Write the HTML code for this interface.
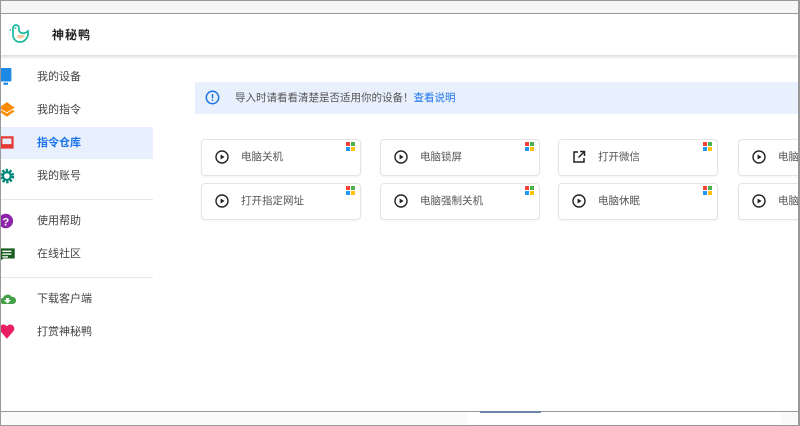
<!DOCTYPE html><html><head><meta charset="utf-8"><style>
*{margin:0;padding:0;box-sizing:border-box}
body{width:800px;height:426px;overflow:hidden;background:#fff;font-family:"Liberation Sans","Noto Sans CJK SC",sans-serif;position:relative}
.abs{position:absolute}
.item{position:absolute;left:0;width:153px;height:32px;font-size:11px;color:#444;line-height:32px;padding-left:37px}
.item .ic{position:absolute;left:0px;top:7px;width:16px;height:18px}
.card{position:absolute;width:160px;height:37px;border:1px solid #e4e4e4;border-radius:4px;font-size:10.5px;color:#555;line-height:35px;padding-left:39px;box-shadow:0 1px 2px rgba(0,0,0,.05)}
.card svg.p{position:absolute;left:13px;top:10px}
.win{position:absolute;right:5px;top:2px;width:9px;height:9px}
</style></head><body>
<div class="abs" style="left:0;top:0;width:800px;height:14px;background:#f6f6f6;border-top:1px solid #999;border-bottom:1px solid #999"></div>
<div class="abs" style="left:0;top:14px;width:798px;height:41px;background:#fff;box-shadow:0 2px 3px rgba(0,0,0,.15)"></div>
<svg class="abs" style="left:9px;top:24px" width="22" height="21" viewBox="0 0 22 21"><path d="M4 4 a3 3 0 0 1 6 0 v3 c2 3 6 3 9 0 c1 6-3 11-8 11 c-4 0-7-3-7-7z" fill="none" stroke="#1bb8a0" stroke-width="1.7"/><path d="M8 11 h8 c-1 3-5 5-8 2z" fill="#f5c9a0"/><circle cx="6.5" cy="4" r="0.9" fill="#1bb8a0"/><path d="M2 5 l-2 1 2 1" fill="#1bb8a0"/></svg>
<div class="abs" style="left:52px;top:26px;font-size:12px;font-weight:bold;color:#222;letter-spacing:1px">神秘鸭</div>
<div class="abs" style="left:0;top:127px;width:153px;height:32px;background:#e8f0fe"></div>
<div class="item" style="top:61px"><svg class="ic" viewBox="0 0 14 16"><rect x="0" y="0" width="10" height="12" rx="1" fill="#1e88e5"/><rect x="3" y="13" width="4" height="2" fill="#1e88e5"/></svg>我的设备</div>
<div class="item" style="top:94px"><svg class="ic" viewBox="0 0 14 16"><path d="M6 1 L13 6 L6 10 L-1 6Z" fill="#fb8c00"/><path d="M-1 9 L6 14 L13 9 L11 8 L6 11 L1 8Z" fill="#fb8c00"/></svg>我的指令</div>
<div class="item" style="top:127px;color:#1a73e8;font-weight:bold"><svg class="ic" viewBox="0 0 14 16"><path d="M0 2h12v11h-12z M2 4v5h8v-5z" fill="#e53935" fill-rule="evenodd"/></svg>指令仓库</div>
<div class="item" style="top:160px"><svg class="ic" viewBox="0 0 14 16"><circle cx="6" cy="8" r="5" fill="none" stroke="#00897b" stroke-width="3" stroke-dasharray="2 1.2"/><circle cx="6" cy="8" r="3.5" fill="none" stroke="#00897b" stroke-width="2"/></svg>我的账号</div>
<div class="abs" style="left:0;top:199px;width:153px;height:1px;background:#e6e6e6"></div>
<div class="item" style="top:205px"><svg class="ic" viewBox="0 0 14 16"><circle cx="5" cy="8" r="6.5" fill="#8e24aa"/><text x="5" y="12" font-size="10" font-weight="bold" fill="#fff" text-anchor="middle" font-family="Liberation Sans">?</text></svg>使用帮助</div>
<div class="item" style="top:238px"><svg class="ic" viewBox="0 0 14 16"><path d="M0 3h13v9h-10l-3 2z" fill="#1b5e20"/><rect x="2" y="5" width="8" height="1.2" fill="#fff"/><rect x="2" y="7.5" width="8" height="1.2" fill="#fff"/><rect x="2" y="10" width="5" height="1.2" fill="#fff"/></svg>在线社区</div>
<div class="abs" style="left:0;top:277px;width:153px;height:1px;background:#e6e6e6"></div>
<div class="item" style="top:283px"><svg class="ic" viewBox="0 0 16 16"><path d="M3 13a3 3 0 0 1 0-6a5 5 0 0 1 9-1a3.5 3.5 0 0 1 1 7z" fill="#43a047"/><path d="M6 7h3v2h2l-3.5 3.5L4 9h2z" fill="#fff"/></svg>下载客户端</div>
<div class="item" style="top:316px"><svg class="ic" viewBox="0 0 14 16"><path d="M6 14 L0 7 a3.5 3.5 0 0 1 6-4 a3.5 3.5 0 0 1 6 4z" fill="#e91e63"/></svg>打赏神秘鸭</div>
<div class="abs" style="left:195px;top:82px;width:605px;height:32px;background:#e8f0fe"></div>
<svg class="abs" style="left:205px;top:90px" width="15" height="15" viewBox="0 0 15 15"><circle cx="7.5" cy="7.5" r="6.2" fill="none" stroke="#1a73e8" stroke-width="1.5"/><rect x="6.8" y="4" width="1.4" height="4.5" fill="#1a73e8"/><rect x="6.8" y="9.6" width="1.4" height="1.4" fill="#1a73e8"/></svg>
<div class="abs" style="left:235px;top:90px;font-size:10.5px;color:#555">导入时请看看清楚是否适用你的设备！<span style="color:#1a73e8">查看说明</span></div>
<svg width="0" height="0" style="position:absolute"><defs><g id="play"><circle cx="7" cy="7" r="6" fill="none" stroke="#222" stroke-width="1.4"/><path d="M5.6 4.5v5l4-2.5z" fill="#222"/></g><g id="w"><rect x="0" y="0" width="4" height="4" fill="#f44336"/><rect x="5" y="0" width="4" height="4" fill="#4caf50"/><rect x="0" y="5" width="4" height="4" fill="#2196f3"/><rect x="5" y="5" width="4" height="4" fill="#ffc107"/></g></defs></svg>
<div class="card" style="left:201px;top:139px"><svg class="p" width="14" height="14"><use href="#play"/></svg>电脑关机<svg class="win"><use href="#w"/></svg></div>
<div class="card" style="left:380px;top:139px"><svg class="p" width="14" height="14"><use href="#play"/></svg>电脑锁屏<svg class="win"><use href="#w"/></svg></div>
<div class="card" style="left:558px;top:139px"><svg class="p" width="14" height="14" viewBox="0 0 14 14"><path d="M6 2H2v10h10V8" fill="none" stroke="#222" stroke-width="1.5"/><path d="M8 1.5h4.5V6M12.5 1.5L6.5 7.5" fill="none" stroke="#222" stroke-width="1.5"/></svg>打开微信<svg class="win"><use href="#w"/></svg></div>
<div class="card" style="left:738px;top:139px"><svg class="p" width="14" height="14"><use href="#play"/></svg>电脑重启</div>
<div class="card" style="left:201px;top:183px"><svg class="p" width="14" height="14"><use href="#play"/></svg>打开指定网址<svg class="win"><use href="#w"/></svg></div>
<div class="card" style="left:380px;top:183px"><svg class="p" width="14" height="14"><use href="#play"/></svg>电脑强制关机<svg class="win"><use href="#w"/></svg></div>
<div class="card" style="left:558px;top:183px"><svg class="p" width="14" height="14"><use href="#play"/></svg>电脑休眠<svg class="win"><use href="#w"/></svg></div>
<div class="card" style="left:738px;top:183px"><svg class="p" width="14" height="14"><use href="#play"/></svg>电脑睡眠</div>
<div class="abs" style="left:0;top:411px;width:800px;height:15px;background:#fafafa;border-top:1px solid #999;border-bottom:1px solid #999"></div>
<div class="abs" style="left:468px;top:412px;width:313px;height:13px;background:#fff"></div>
<div class="abs" style="left:480px;top:411px;width:61px;height:2px;background:#6a87a8"></div>
<div class="abs" style="left:0;top:0;width:1px;height:426px;background:#999"></div>
<div class="abs" style="right:0;top:0;width:2px;height:426px;background:#999"></div>
</body></html>
